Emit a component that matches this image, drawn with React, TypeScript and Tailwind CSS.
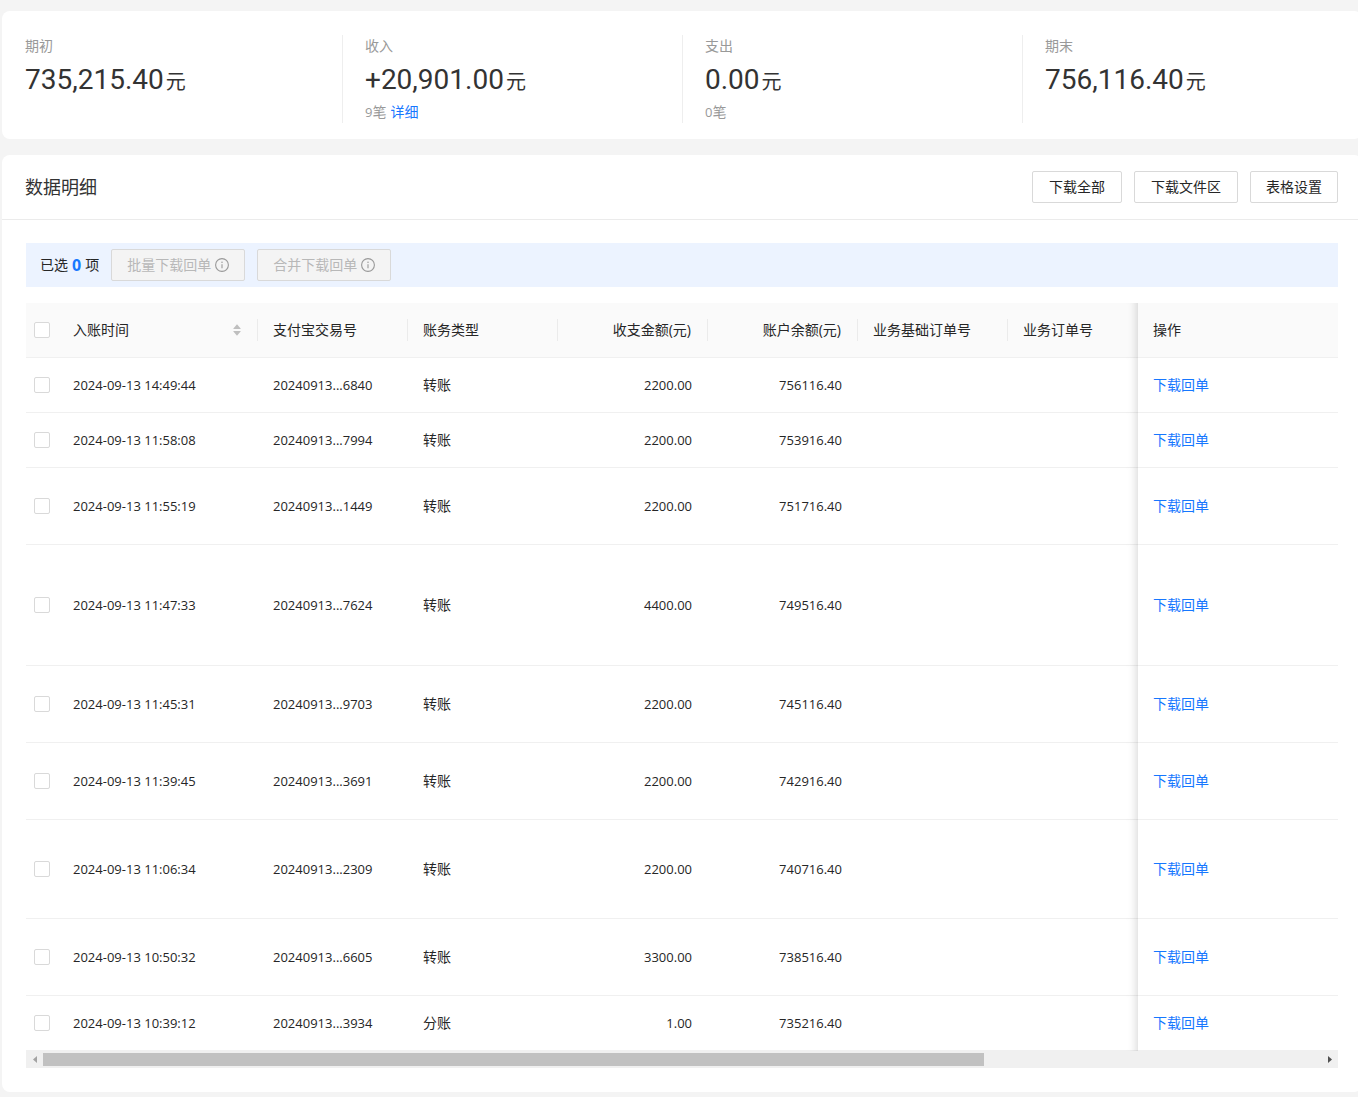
import { useState } from "react";

interface IRecord {
  time: string;
  tradeNo: string;
  type: string;
  amount: string;
  balance: string;
  height: string;
}

interface IStat {
  label: string;
  value: string;
  count?: string;
  detail?: boolean;
}

const stats: IStat[] = [
  { label: "期初", value: "735,215.40" },
  { label: "收入", value: "+20,901.00", count: "9", detail: true },
  { label: "支出", value: "0.00", count: "0" },
  { label: "期末", value: "756,116.40" },
];

const records: IRecord[] = [
  { time: "2024-09-13 14:49:44", tradeNo: "20240913...6840", type: "转账", amount: "2200.00", balance: "756116.40", height: "h-[55px]" },
  { time: "2024-09-13 11:58:08", tradeNo: "20240913...7994", type: "转账", amount: "2200.00", balance: "753916.40", height: "h-[55px]" },
  { time: "2024-09-13 11:55:19", tradeNo: "20240913...1449", type: "转账", amount: "2200.00", balance: "751716.40", height: "h-[77px]" },
  { time: "2024-09-13 11:47:33", tradeNo: "20240913...7624", type: "转账", amount: "4400.00", balance: "749516.40", height: "h-[121px]" },
  { time: "2024-09-13 11:45:31", tradeNo: "20240913...9703", type: "转账", amount: "2200.00", balance: "745116.40", height: "h-[77px]" },
  { time: "2024-09-13 11:39:45", tradeNo: "20240913...3691", type: "转账", amount: "2200.00", balance: "742916.40", height: "h-[77px]" },
  { time: "2024-09-13 11:06:34", tradeNo: "20240913...2309", type: "转账", amount: "2200.00", balance: "740716.40", height: "h-[99px]" },
  { time: "2024-09-13 10:50:32", tradeNo: "20240913...6605", type: "转账", amount: "3300.00", balance: "738516.40", height: "h-[77px]" },
  { time: "2024-09-13 10:39:12", tradeNo: "20240913...3934", type: "分账", amount: "1.00", balance: "735216.40", height: "h-[54px]" },
];

const checkboxClass =
  "block size-4 appearance-none rounded-[2px] border border-[#d9d9d9] bg-white checked:border-[#1677ff] checked:bg-[#1677ff]";

// shadow on the left of the fixed column
const shadowClass =
  "relative after:pointer-events-none after:absolute after:top-0 after:right-0 after:-bottom-px after:w-[30px] after:shadow-[inset_-10px_0_8px_-8px_rgba(0,0,0,0.15)]";

function InfoIcon() {
  return (
    <svg viewBox="0 0 14 14" className="size-[14px]" fill="none" stroke="#999" aria-hidden="true">
      <circle cx="7" cy="7" r="6.4" strokeWidth="1.1" />
      <path d="M7 6.2v4" strokeWidth="1.1" />
      <circle cx="7" cy="4.3" r="0.75" fill="#999" stroke="none" />
    </svg>
  );
}

function SortIcon() {
  return (
    <svg viewBox="0 0 8 12" className="h-3 w-2" fill="#bfbfbf" aria-hidden="true">
      <path d="M4 0.3 7.6 4.4a.35.35 0 0 1-.3.6H.7a.35.35 0 0 1-.3-.6Z" />
      <path d="M4 11.7 7.6 7.6a.35.35 0 0 0-.3-.6H.7a.35.35 0 0 0-.3.6Z" />
    </svg>
  );
}

function Stat({ stat, first }: { stat: IStat; first: boolean }) {
  return (
    <div
      className={`h-[88px] border-l pl-[22px] text-sm leading-[22px] text-[#999] ${
        first ? "border-transparent" : "border-[#eee]"
      }`}
    >
      <p>{stat.label}</p>
      <p className="flex h-11 items-baseline gap-[2px] text-xl leading-[46px] text-[#333]">
        <span className="font-[Roboto] text-[28px]">{stat.value}</span>元
      </p>
      {stat.count && (
        <p className="flex items-center">
          <span className="text-[13px]">{stat.count}</span>笔
          {stat.detail && (
            <a href="#detail" className="ml-1 text-[#1677ff]">
              详细
            </a>
          )}
        </p>
      )}
    </div>
  );
}

function HeadCell({ children, className = "" }: { children: React.ReactNode; className?: string }) {
  return (
    <th className="border-b border-[#f0f0f0] pl-[15px] font-normal">
      <div className={`flex h-[22px] items-center border-r border-[#ebebeb] pr-4 ${className}`}>
        {children}
      </div>
    </th>
  );
}

function App() {
  const [selected, setSelected] = useState<string[]>([]);

  const toggle = (time: string) => {
    setSelected((prev) =>
      prev.includes(time) ? prev.filter((t) => t !== time) : [...prev, time]
    );
  };

  const toggleAll = () => {
    setSelected(selected.length === records.length ? [] : records.map((r) => r.time));
  };

  return (
    <div className="min-h-screen overflow-hidden bg-[#f4f4f4] font-['Open_Sans','Noto_Sans_CJK_SC',sans-serif] text-sm leading-[22px] text-[#262626]">
      <main className="-mr-1 ml-[2px] flex flex-col gap-4 pt-[11px] pb-[5px]">
        <section className="grid grid-cols-4 rounded-lg bg-white pt-6 pb-4">
          {stats.map((stat, i) => (
            <Stat key={stat.label} stat={stat} first={i === 0} />
          ))}
        </section>

        <section className="rounded-lg bg-white">
          <header className="flex h-[65px] items-center justify-between border-b border-[#ebebeb] pr-6 pl-[23px]">
            <h2 className="text-lg text-[#333]">数据明细</h2>
            <div className="flex gap-3">
              <button className="h-8 rounded-[2px] border border-[#d9d9d9] px-4">下载全部</button>
              <button className="h-8 rounded-[2px] border border-[#d9d9d9] px-4">下载文件区</button>
              <button className="h-8 rounded-[2px] border border-[#d9d9d9] px-[15px]">表格设置</button>
            </div>
          </header>

          <div className="px-6 pt-[23px] pb-6">
            <div className="flex h-11 items-center gap-3 bg-[#ecf3ff] px-[14px]">
              <p className="flex items-center gap-1">
                已选
                <span className="text-base font-bold text-[#1677ff]">{selected.length}</span>
                项
              </p>
              <button
                disabled
                className="flex h-8 items-center gap-1 rounded-[2px] border border-[#d9d9d9] bg-[#f4f4f4] px-[15px] text-[#b8b8b8]"
              >
                批量下载回单
                <InfoIcon />
              </button>
              <button
                disabled
                className="flex h-8 items-center gap-1 rounded-[2px] border border-[#d9d9d9] bg-[#f4f4f4] px-[15px] text-[#b8b8b8]"
              >
                合并下载回单
                <InfoIcon />
              </button>
            </div>

            <table className="mt-4 w-full table-fixed border-separate border-spacing-0 text-left">
              <colgroup>
                <col className="w-8" />
                <col className="w-[200px]" />
                <col className="w-[150px]" />
                <col className="w-[150px]" />
                <col className="w-[150px]" />
                <col className="w-[150px]" />
                <col className="w-[150px]" />
                <col />
                <col className="w-[200px]" />
              </colgroup>
              <thead className="bg-[#fafafa]">
                <tr className="h-[55px]">
                  <th className="border-b border-[#f0f0f0] px-2">
                    <input
                      type="checkbox"
                      aria-label="全选"
                      className={checkboxClass}
                      checked={selected.length === records.length}
                      onChange={toggleAll}
                    />
                  </th>
                  <HeadCell className="justify-between">
                    入账时间
                    <button aria-label="排序">
                      <SortIcon />
                    </button>
                  </HeadCell>
                  <HeadCell>支付宝交易号</HeadCell>
                  <HeadCell>账务类型</HeadCell>
                  <HeadCell className="justify-end">收支金额(元)</HeadCell>
                  <HeadCell className="justify-end">账户余额(元)</HeadCell>
                  <HeadCell>业务基础订单号</HeadCell>
                  <th className={`border-b border-[#f0f0f0] pl-[15px] font-normal ${shadowClass}`}>业务订单号</th>
                  <th className="border-b border-[#f0f0f0] pl-[15px] font-normal">操作</th>
                </tr>
              </thead>
              <tbody className="[&_td]:border-b [&_td]:border-[#f0f0f0] [&_tr:last-child_td]:border-b-0">
                {records.map((record) => (
                  <tr key={record.time} className={record.height}>
                    <td className="px-2">
                      <input
                        type="checkbox"
                        aria-label={record.time}
                        className={checkboxClass}
                        checked={selected.includes(record.time)}
                        onChange={() => toggle(record.time)}
                      />
                    </td>
                    <td className="px-[15px] text-[13px]">{record.time}</td>
                    <td className="px-[15px] text-[13px]">{record.tradeNo}</td>
                    <td className="px-[15px]">{record.type}</td>
                    <td className="px-4 text-right text-[13px]">{record.amount}</td>
                    <td className="px-4 text-right text-[13px]">{record.balance}</td>
                    <td></td>
                    <td className={shadowClass}></td>
                    <td className="px-[15px]">
                      <a href="#receipt" className="text-[#1677ff]">
                        下载回单
                      </a>
                    </td>
                  </tr>
                ))}
              </tbody>
            </table>

            <div className="flex h-[18px] items-center bg-[#f0f0f0]">
              <button aria-label="向左滚动" className="flex w-[17px] justify-center">
                <svg viewBox="0 0 4 7" className="h-[7px] w-1" fill="#a3a3a3">
                  <path d="M4 0v7L0 3.5Z" />
                </svg>
              </button>
              <div className="flex-1">
                <div className="h-[13px] w-[73.6%] bg-[#c1c1c1]"></div>
              </div>
              <button aria-label="向右滚动" className="flex w-[17px] justify-center">
                <svg viewBox="0 0 4 7" className="h-[7px] w-1" fill="#505050">
                  <path d="M0 0v7L4 3.5Z" />
                </svg>
              </button>
            </div>
          </div>
        </section>
      </main>
    </div>
  );
}

export default App;
